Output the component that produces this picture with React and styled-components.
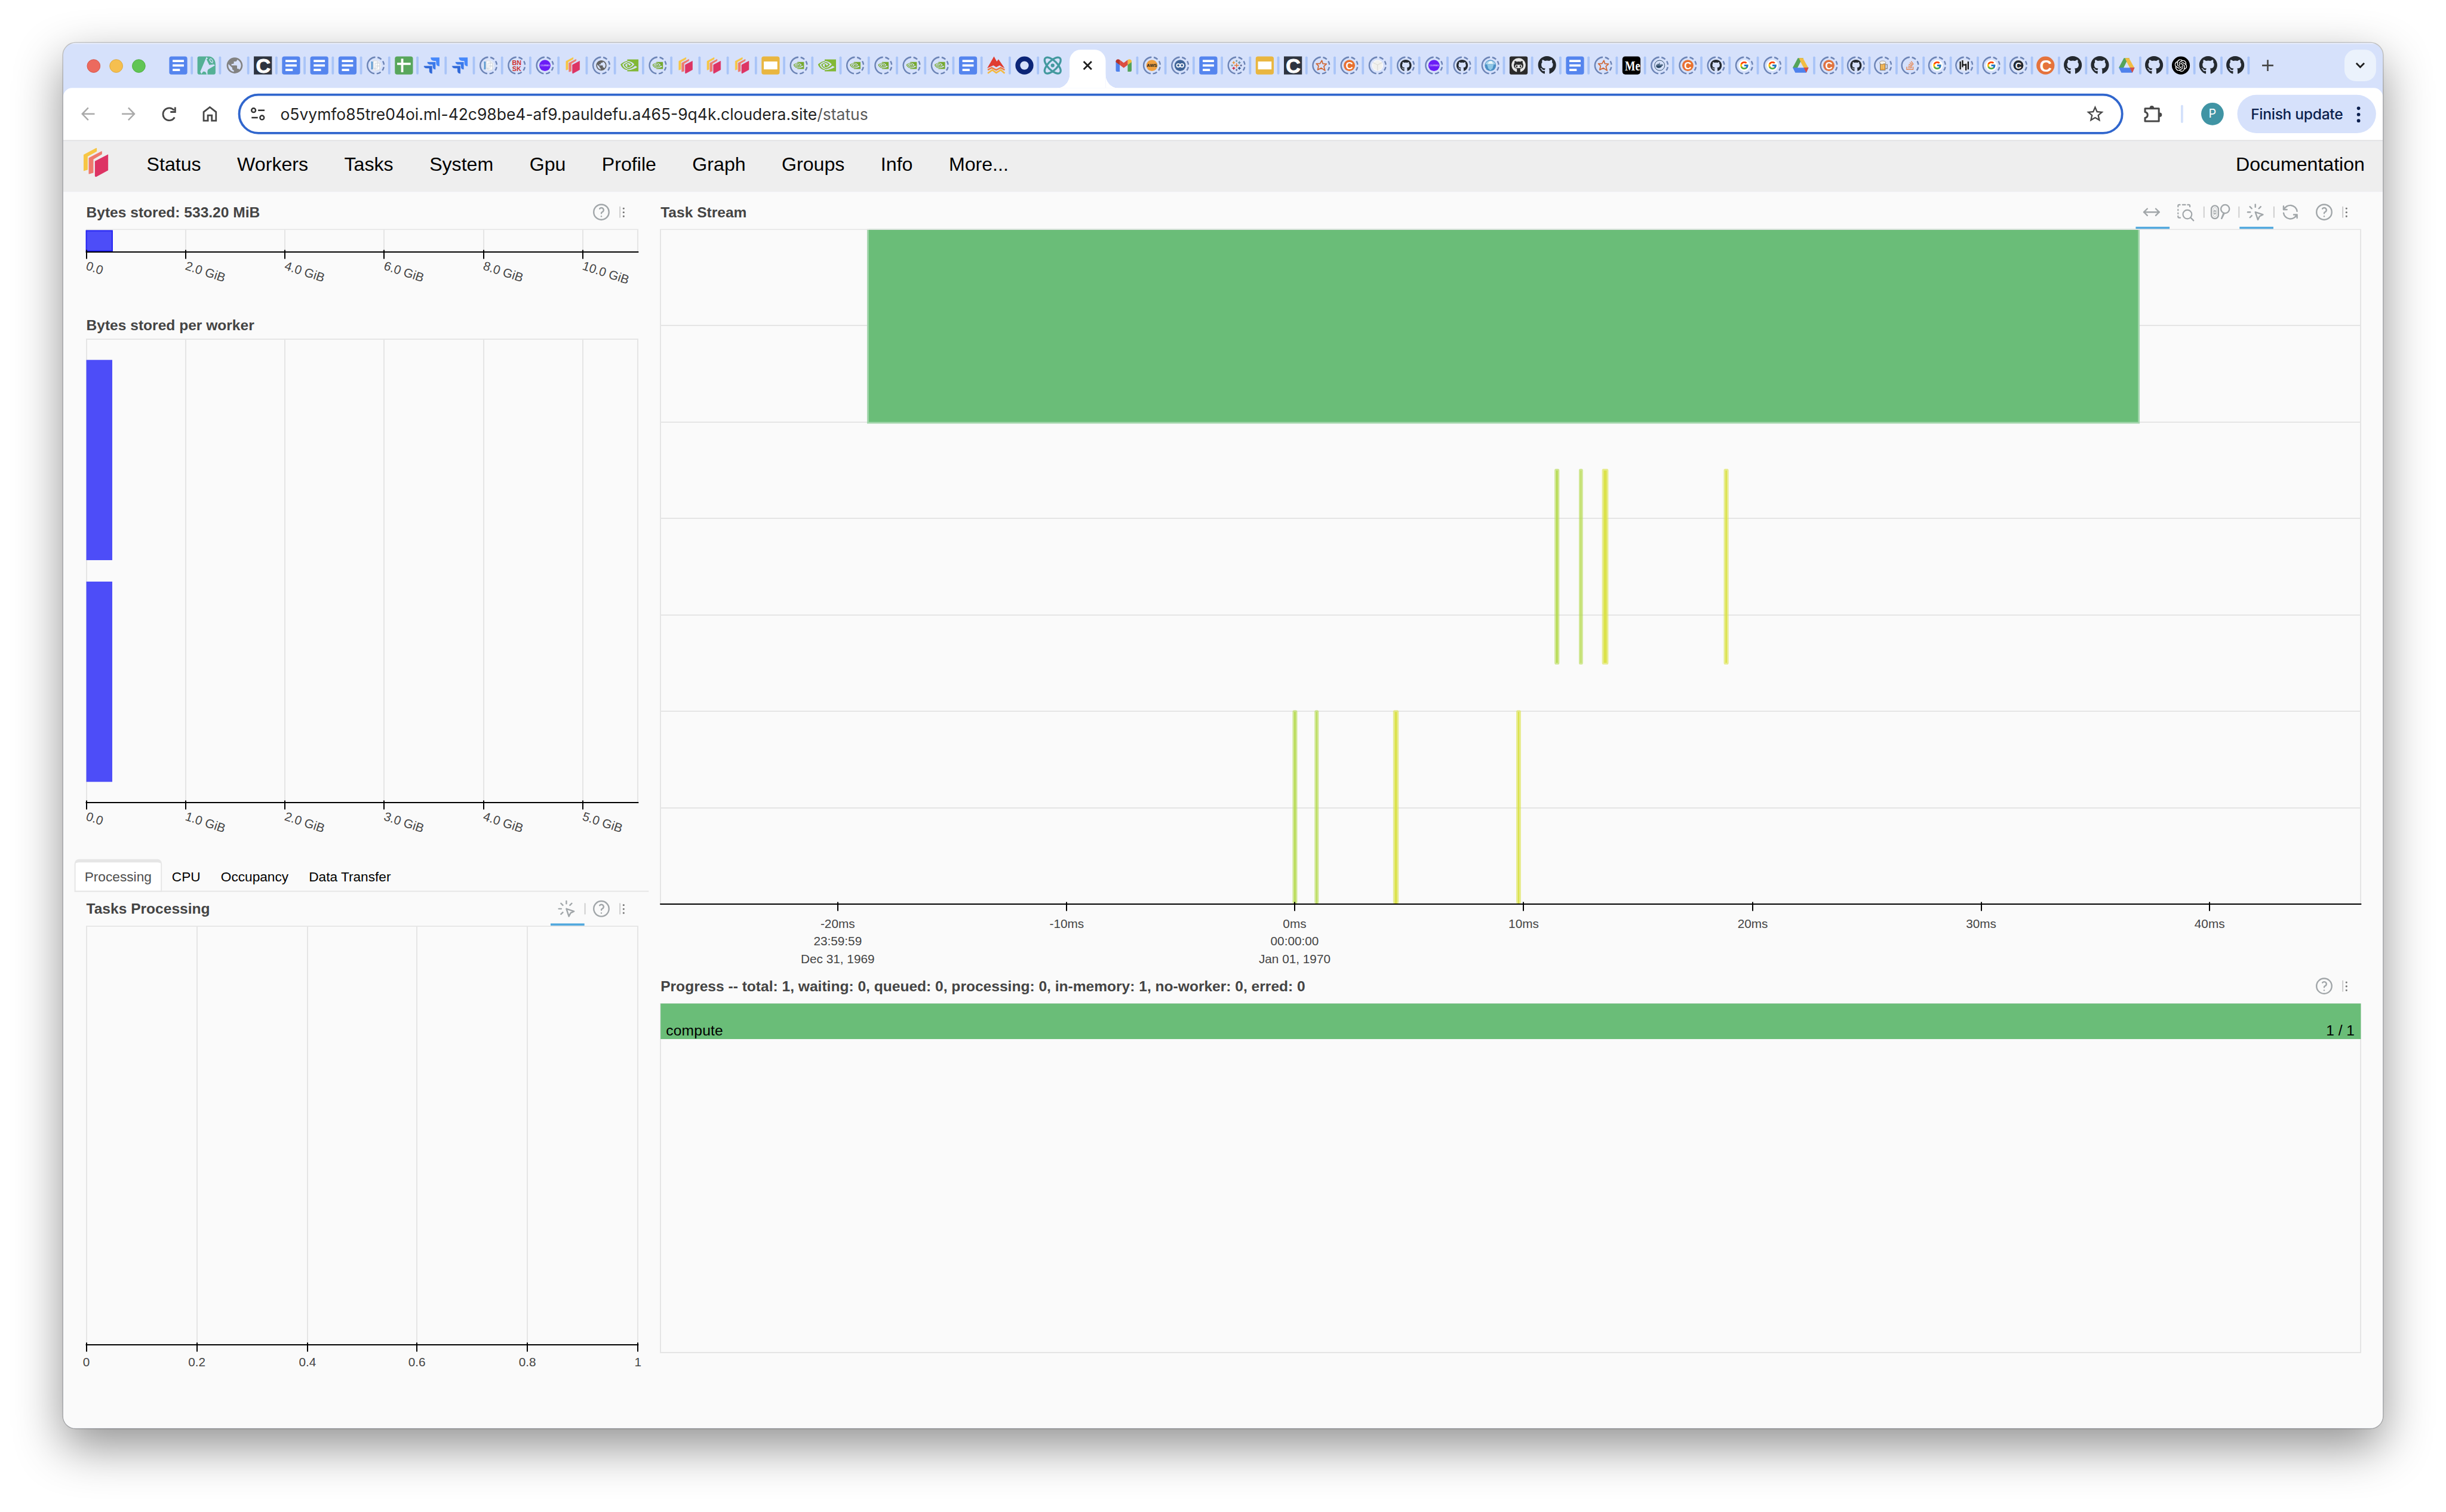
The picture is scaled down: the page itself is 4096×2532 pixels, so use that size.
import React from "react";
import styled, { createGlobalStyle, css } from "styled-components";
import { MdPublic, MdStarBorder } from "react-icons/md";
import { FaGithub, FaGithubAlt, FaStackOverflow, FaDocker } from "react-icons/fa";
import { FcGoogle } from "react-icons/fc";
import { SiNvidia, SiOpenai } from "react-icons/si";
import { TbArrowsHorizontal, TbClick, TbHelp, TbRefresh } from "react-icons/tb";
import { Atom } from "lucide-react";

const sans = `"Liberation Sans", Arial, sans-serif`;
const ui = `Inter, Roboto, sans-serif`;
const scale = 4096 / 4336;

const GlobalStyle = createGlobalStyle`
  html, body { margin: 0; background: #fff; overflow: hidden; }
  *, *::before, *::after { box-sizing: border-box; }
  svg { display: block; flex: none; }
`;

/* ---------- window ---------- */

const Viewport = styled.div`
  width: 4096px;
  height: 2532px;
  overflow: hidden;
`;

const Desktop = styled.div`
  width: 4336px;
  height: 2680px;
  padding: 76px 112px 148px;
  transform: scale(${scale});
  transform-origin: 0 0;
  background: #fff;
  font-family: ${sans};
`;

const Window = styled.div`
  height: 2456px;
  display: flex;
  flex-direction: column;
  border-radius: 22px;
  overflow: hidden;
  background: #d6e1fb;
  box-shadow: 0 0 0 1.5px rgba(0, 0, 0, 0.2), 0 32px 84px rgba(0, 0, 0, 0.43);
`;

/* ---------- tab strip ---------- */

const TabStrip = styled.div`
  height: 80px;
  flex: none;
  display: flex;
  align-items: center;
  padding: 0 12px 0 42px;
  box-shadow: inset 0 2px 0 rgba(255, 255, 255, 0.45);
`;

const Lights = styled.div`
  display: flex;
  gap: 16px;
  padding-top: 2px;
  margin-right: 42px;
`;

const Light = styled.span`
  width: 24px;
  height: 24px;
  border-radius: 50%;
  background: ${(p) => p.$color};
  border: 1px solid ${(p) => p.$edge};
`;

const TabSlot = styled.div`
  width: ${(p) => (p.$narrow ? 48 : 50)}px;
  height: 32px;
  display: flex;
  gap: 6px;

  &::after {
    content: "";
    display: ${(p) => (p.$last ? "none" : "block")};
    width: 4px;
    height: 32px;
    border-radius: 2px;
    background: #a9c4f7;
  }
`;

const ActiveTab = styled.div`
  position: relative;
  align-self: flex-end;
  width: 64px;
  height: 68px;
  margin: 0 16px 0 -4px;
  padding-bottom: 12px;
  display: flex;
  align-items: center;
  justify-content: center;
  background: #fff;
  border-radius: 20px 20px 0 0;

  &::before,
  &::after {
    content: "";
    position: absolute;
    bottom: 0;
    width: 22px;
    height: 24px;
  }
  &::before {
    right: 100%;
    background: radial-gradient(ellipse at 0 0, transparent 70%, #fff 71.5%);
  }
  &::after {
    left: 100%;
    background: radial-gradient(ellipse at 100% 0, transparent 70%, #fff 71.5%);
  }
`;

const NewTab = styled.div`
  width: 48px;
  display: flex;
  justify-content: center;
  margin-left: 2px;
`;

const TabSearch = styled.div`
  width: 56px;
  height: 56px;
  margin-left: auto;
  display: flex;
  align-items: center;
  justify-content: center;
  border-radius: 20px;
  background: #ebf2fc;
`;

/* ---------- address toolbar ---------- */

const Toolbar = styled.div`
  height: 94px;
  flex: none;
  display: flex;
  align-items: center;
  padding: 0 12px 0 8px;
  background: #fff;
  border-bottom: 2px solid #e0e0e0;
  border-radius: 16px 16px 0 0;
`;

const ToolbarButton = styled.div`
  width: 72px;
  display: flex;
  justify-content: center;
  color: ${(p) => (p.$dim ? "#a9a9a9" : "#474747")};
`;

const Omnibox = styled.div`
  flex: 1;
  height: 72px;
  margin: 0 16px 0 14px;
  padding: 0 28px 0 18px;
  display: flex;
  align-items: center;
  border: 4px solid #3066cd;
  border-radius: 36px;
  background: #fff;
`;

const Url = styled.div`
  flex: 1;
  margin-left: 27px;
  padding-top: 1px;
  font: 400 28px/36px ${ui};
  color: #1f1f1f;
  white-space: nowrap;

  span { color: #5a5a5a; }
`;

const ToolbarRule = styled.span`
  width: 4px;
  height: 32px;
  margin: 0 32px 0 14px;
  border-radius: 2px;
  background: #d3e1fb;
`;

const Avatar = styled.div`
  width: 40px;
  height: 40px;
  border-radius: 50%;
  display: flex;
  align-items: center;
  justify-content: center;
  background: #4094a4;
  color: #fff;
  font: 400 21px/40px ${ui};
`;

const UpdatePill = styled.div`
  width: 246px;
  height: 68px;
  margin-left: 24px;
  padding: 1px 27px 0 24px;
  display: flex;
  align-items: center;
  justify-content: space-between;
  border-radius: 34px;
  background: #d6e1fb;
  color: #0b1f4d;
  font: 500 26px/34px ${ui};
  letter-spacing: -0.3px;
  white-space: nowrap;
`;

/* ---------- dashboard ---------- */

const Nav = styled.nav`
  height: 90px;
  flex: none;
  display: flex;
  align-items: flex-start;
  gap: 64px;
  padding: 12px 32px 0 36px;
  background: #eee;
  color: #000;
`;

const NavLink = styled.a`
  margin-top: 12px;
  font: 400 34px/34px ${sans};
  white-space: nowrap;
  margin-left: ${(p) => (p.$right ? "auto" : p.$first ? "4px" : "0")};
`;

const Dashboard = styled.main`
  flex: 1;
  display: grid;
  grid-template-columns: 1018px 1fr;
  padding: 6px 0 0 20px;
  background: #fafafa;
`;

const Column = styled.section`
  display: flex;
  flex-direction: column;
  min-width: 0;
`;

const PlotHeader = styled.header`
  height: ${(p) => (p.$compact ? 48 : 60)}px;
  flex: none;
  display: flex;
  align-items: center;
  justify-content: space-between;
  padding: 0 ${(p) => p.$inset}px 0 21px;
`;

const PlotTitle = styled.h2`
  margin: 0;
  font: 700 26px/30px ${sans};
  color: #444;
  white-space: nowrap;
`;

const Tools = styled.div`
  height: 60px;
  display: flex;
  align-items: center;
  color: #a1a6a9;
`;

const Tool = styled.span`
  width: 60px;
  height: 60px;
  display: flex;
  align-items: center;
  justify-content: center;
  padding-right: 4px;
  border: 0 solid #51a8dd;
  ${(p) => p.$active && css`border-bottom-width: 4px; padding-top: 4px;`}
`;

const ToolRule = styled.span`
  width: 2px;
  height: 20px;
  background: #ccc;
`;

const Grip = styled.span`
  display: flex;
  flex-direction: column;
  gap: 4px;
  margin-left: 4px;

  i {
    width: 3px;
    height: 3px;
    border-radius: 1px;
    background: #777;
  }
`;

const PanelTabs = styled.div`
  height: 58px;
  flex: none;
  display: flex;
  border-bottom: 2px solid #e6e6e6;
`;

const PanelTab = styled.div`
  height: 58px;
  padding: 13px 16px 0;
  border: 2px solid transparent;
  border-top-width: 6px;
  border-radius: 8px 8px 0 0;
  font: 400 24px/24px ${sans};
  color: #000;
  white-space: nowrap;
  ${(p) => p.$active && css`
    color: #4d4d4d;
    background: #fff;
    border-color: #e6e6e6;
  `}
`;

/* ---------- favicons, each on a 32 x 32 grid ---------- */

const FavSvg = styled.svg`
  overflow: visible;
`;

const Fav = ({ children, ...rest }) => (
  <FavSvg width="32" height="32" viewBox="0 0 32 32" {...rest}>{children}</FavSvg>
);

const Doc = () => (
  <Fav>
    <rect width="32" height="32" rx="4" fill="#5585ee" />
    <path d="M6 8h20M6 16h20M6 24h13" stroke="#fff" strokeWidth="4" />
  </Fav>
);
const Sheet = () => (
  <Fav>
    <rect width="32" height="32" rx="4" fill="#58a65c" />
    <path d="M4 13.2h24M13 4v24" stroke="#fff" strokeWidth="4" />
  </Fav>
);
const Slide = () => (
  <Fav>
    <rect width="32" height="32" rx="4" fill="#e9b640" />
    <rect x="4" y="9" width="24" height="14" fill="#fff" />
  </Fav>
);
const Giraffe = () => (
  <Fav>
    <path d="M3 0h17C27 0 32 6 32 14v15a3 3 0 0 1-3 3H3a3 3 0 0 1-3-3V3a3 3 0 0 1 3-3z" fill="#54b095" />
    <path d="M16 1l15 15-12 7c-2 3-1 6-1 9h-2c0-4-3-6-6-5l-3 4-2-4z" fill="#d6e1fb" />
    <path d="M20 3c1 5 5 9 10 11l-9 1-5-10z" fill="#54b095" />
    <ellipse cx="24.500" cy="7.500" rx="2" ry="3.600" transform="rotate(-35 24.500 7.500)" fill="none" stroke="#d6e1fb" strokeWidth="1.200" />
  </Fav>
);
const Globe = () => <MdPublic size={34} color="#828282" style={{ margin: "-1px -1px" }} />;
const Letter = ({ bg, round, size = 36, y = 29 }) => (
  <Fav>
    {round ? <circle cx="16" cy="16" r="16" fill={bg} /> : <rect width="32" height="32" fill={bg} />}
    <text x="16.500" y={y} textAnchor="middle" fontFamily={sans} fontWeight="700" fontSize={size} fill="#fff"
      stroke={round ? "none" : "#fff"} strokeWidth="1">C</text>
  </Fav>
);
const Jira = () => (
  <Fav>
    <path d="M13.500 2H29v15.500c-4 0-6-2.500-6-6V8h-3.500c-3.500 0-6-2-6-6z" fill="#4688fb" />
    <path d="M7 9.500h15.500v14c-4 0-6-2-6-5.500v-3.200H13c-3.600 0-6-2-6-5.300z" fill="#3a79ea" stroke="#d6e1fb" strokeWidth=".8" />
    <path d="M1 16.500h15.500v14.500c-4 0-6-2-6-6v-3.500H7c-3.600 0-6-1.500-6-5z" fill="#2f68d8" stroke="#d6e1fb" strokeWidth=".8" />
  </Fav>
);
const DaskMark = () => (
  <g strokeLinejoin="round" strokeWidth="1.200">
    <path d="M.6 12.600L23 .8v5.400L6.800 15V38.500L.6 40.500z" fill="#f7c644" stroke="#f7c644" />
    <path d="M9.800 18.300L32.200 6.600v4.600L17 20.200V44L9.800 46z" fill="#ef7a6d" stroke="#ef7a6d" />
    <path d="M20.800 24.200L43.400 12.400V39.500L22 51.200l-1.200-1z" fill="#dd3464" stroke="#dd3464" />
  </g>
);
const Dask = () => <Fav viewBox="-5 -2.5 56 57"><DaskMark /></Fav>;
const Nvidia = () => <SiNvidia size={32} color="#82b836" />;
const Mountain = () => (
  <Fav>
    <path d="M0 21L12 0l5 9 3-4 11 16-4-2-5-3-6 3-5-3z" fill="#e03c31" />
    <path d="M1 24l7-4 8 4 8-4 7 4" fill="none" stroke="#ee7a3c" strokeWidth="2.500" />
    <path d="M1 30l8-6 7 5 8-5 7 6" fill="none" stroke="#f4b942" strokeWidth="2.800" />
  </Fav>
);
const NavyRing = () => <Fav><circle cx="16" cy="16" r="11.800" fill="none" stroke="#0c2577" strokeWidth="8.400" /></Fav>;
const ReactAtom = () => <Atom size={38} strokeWidth={2.200} color="#43999f" style={{ margin: "-3px -3px" }} />;
const Gmail = () => (
  <Fav>
    <path d="M2 8v17a2 2 0 0 0 2 2h5V14z" fill="#4f82ec" />
    <path d="M30 8v17a2 2 0 0 1-2 2h-5V14z" fill="#53a35a" />
    <path d="M2 9c0-4 4-5 7-3v9l-7-5z" fill="#b73229" />
    <path d="M30 9c0-4-4-5-7-3v9l7-5z" fill="#f2bd42" />
    <path d="M9 6l7 5.500L23 6v9l-7 5.500L9 15z" fill="#dc4d41" />
  </Fav>
);
const Drive = () => (
  <Fav>
    <path d="M11 3h5l5 0-6 8L7.500 27 2 20z" fill="#54a45a" />
    <path d="M13 3h7l10 18H21z" fill="#f2bd42" />
    <path d="M2 20h28l-4 9H6.500z" fill="#4f82ec" />
    <path d="M21.500 20H30l-4 9z" fill="#dc4d41" />
    <path d="M16 11l5.500 9h-11z" fill="#d6e1fb" />
  </Fav>
);
const Octocat = () => <FaGithub size={33} color="#24292f" style={{ margin: "-1px -1px 0 0" }} />;
const OctocatTile = () => (
  <Fav>
    <rect width="32" height="32" rx="3" fill="#2b2b2b" />
    <circle cx="16" cy="15.500" r="12.500" fill="#e6e6e6" />
    <FaGithubAlt x="7" y="6" size={18} color="#2b2b2b" />
    <path d="M13 21h6v8h-6z" fill="#2b2b2b" />
  </Fav>
);
const Medium = () => (
  <Fav>
    <rect width="32" height="32" rx="5" fill="#000" />
    <text x="4.500" y="24.500" fontFamily={`"Liberation Serif", serif`} fontWeight="700" fontSize="25" fill="#fff"
      textLength="27" lengthAdjust="spacingAndGlyphs">Me</text>
  </Fav>
);
const OpenAi = () => (
  <Fav>
    <circle cx="16" cy="16" r="16" fill="#000" />
    <SiOpenai x="5" y="5" size={22} color="#fff" />
  </Fav>
);

/* a sleeping tab: the favicon shrinks inside a broken ring */
const Asleep = ({ children }) => (
  <Fav>
    <circle cx="16" cy="16" r="14.700" fill="none" stroke="#6c84b6" strokeWidth="2.600" pathLength="360"
      strokeDasharray="168 16 30 16 26 16 26 16 30 16" transform="rotate(99 16 16)" />
    {children}
  </Fav>
);
const Disc = ({ fill, children }) => (
  <Asleep><circle cx="16" cy="16" r="10" fill={fill} />{children}</Asleep>
);
const tiny = (text, size, fill, y, family = sans) => (
  <text x="16" y={y} textAnchor="middle" fontFamily={family} fontWeight="700" fontSize={size} fill={fill}>{text}</text>
);
const SleepDocs = () => (
  <Disc fill="#e9edf4">
    <path d="M8 9h3v14H8z" fill="#5d9ad0" />
    <path d="M12 8h7v13h-7zM15 12h8v12h-8z" fill="#fbfbfb" stroke="#c6ccd6" strokeWidth=".8" />
    <path d="M17 17h6" stroke="#c6ccd6" />
  </Disc>
);
const SleepBnsk = () => <Asleep>{tiny("BN", 11.500, "#d0312d", 15.500)}{tiny("SK", 11.500, "#d0312d", 25.500)}</Asleep>;
const SleepPurple = () => <Disc fill="#6b1cf6">{tiny("COURSES", 3.300, "#d9c6ff", 17)}</Disc>;
const SleepGlobe = () => <Asleep><MdPublic x="5" y="5" size={22} color="#636363" /></Asleep>;
const SleepNvidia = () => <Asleep><SiNvidia x="6.500" y="6.500" size={19} color="#76a92f" /></Asleep>;
const SleepAws = () => <Disc fill="#f0a040">{tiny("AWS", 8, "#222", 19)}</Disc>;
const SleepInfinity = () => (
  <Disc fill="#3f6497">
    <circle cx="12.800" cy="16" r="3" fill="none" stroke="#fff" strokeWidth="1.800" />
    <circle cx="19.200" cy="16" r="3" fill="none" stroke="#fff" strokeWidth="1.800" />
  </Disc>
);
const plus = (x, y, r, c) => <path key={x + "-" + y} d={`M${x - r} ${y}h${2 * r}M${x} ${y - r}v${2 * r}`} stroke={c} strokeWidth="1.500" />;
const SleepTableau = () => (
  <Asleep>
    {[[16, 16, 4, "#e8762d"], [11, 11, 2.500, "#eb9129"], [21, 11, 2.500, "#5b879b"], [11, 21, 2.500, "#c72035"], [21, 21, 2.500, "#1f447e"],
      [16, 8, 1.700, "#7199a6"], [16, 24, 1.700, "#5c6692"], [8, 16, 1.700, "#7199a6"], [24, 16, 1.700, "#5c6692"]].map((a) => plus(...a))}
  </Asleep>
);
const SleepStar = () => (
  <Asleep>
    <path d="M16 7l2.500 5.500 6.500-.5-4 5 3 7-7-3.500-6 4 .5-7L7 14l6.500-.8z" fill="none" stroke="#cf6a3a" strokeWidth="1.900" strokeLinejoin="round" transform="rotate(8 16 16)" />
  </Asleep>
);
const SleepC = ({ fill = "#e8702f" }) => <Disc fill={fill}>{tiny("C", 18, "#fff", 22.300)}</Disc>;
const SleepCDark = () => (
  <Disc fill="#fff">
    <circle cx="16" cy="16" r="9" fill="#262b33" />
    {tiny("C", 15, "#fff", 21.300)}
  </Disc>
);
const SleepCube = () => (
  <Disc fill="#fafafa">
    <path d="M16 7l8 4v10l-8 4.500L8 21V11z" fill="#f1f1ee" />
    <path d="M8 11l8 4 8-4M16 15v10" fill="none" stroke="#d4d4cf" />
  </Disc>
);
const SleepOctocat = () => <Asleep><FaGithub x="5.500" y="5.500" size={21} color="#24292f" /></Asleep>;
const SleepIceberg = () => (
  <Disc fill="#4a8fc4">
    <path d="M7 14a9.500 9.500 0 0 1 18 0z" fill="#a9d3ea" />
    <path d="M11 13l3-4 4-1 3 5z" fill="#eef8fc" />
    <path d="M10 14h12l-2 7-4 4-4-4z" fill="#8fc7e6" />
  </Disc>
);
const SleepDocker = () => (
  <Asleep>
    <circle cx="16" cy="16" r="9" fill="none" stroke="#2d4a66" strokeWidth="1" />
    <FaDocker x="9.500" y="9.500" size={13} color="#2d4a66" />
  </Asleep>
);
const SleepGoogle = () => <Disc fill="#fff"><FcGoogle x="7.500" y="7.500" size={17} /></Disc>;
const SleepBeer = () => (
  <Asleep>
    <path d="M11 12h9v12.500h-9z" fill="#e9a23b" stroke="#666" strokeWidth=".8" />
    <path d="M20.500 14.500h3v7h-3" fill="none" stroke="#8a8a8a" strokeWidth="1.400" />
    <path d="M10 12c0-3 2-4 5.500-4S21 9 21 12c-2 2-3 0-5 1.500-2 1.500-4 0-6-1.500z" fill="#f6f2ea" stroke="#777" strokeWidth=".7" />
    <path d="M14 15v7M17 15v7" stroke="#f6d58c" strokeWidth="1.200" />
  </Asleep>
);
const SleepStack = () => <Asleep><FaStackOverflow x="7" y="7" size={18} color="#e8844a" /></Asleep>;
const SleepHn = () => (
  <Disc fill="#e8ebf2">
    <path d="M9 9v14M13 7v12M19 13v12M23 9v14M13 15h6" stroke="#151515" strokeWidth="2.400" fill="none" />
  </Disc>
);

const leftTabs = [
  Doc, Giraffe, Globe, () => <Letter bg="#2e3440" />, Doc, Doc, Doc, SleepDocs, Sheet, Jira, Jira, SleepDocs,
  SleepBnsk, SleepPurple, Dask, SleepGlobe, Nvidia, SleepNvidia, Dask, Dask, Dask, Slide, SleepNvidia, Nvidia,
  SleepNvidia, SleepNvidia, SleepNvidia, SleepNvidia, Doc, Mountain, NavyRing, ReactAtom,
];
const rightTabs = [
  Gmail, SleepAws, SleepInfinity, Doc, SleepTableau, Slide, () => <Letter bg="#2e3440" />, SleepStar, SleepC,
  SleepCube, SleepOctocat, SleepPurple, SleepOctocat, SleepIceberg, OctocatTile, Octocat, Doc, SleepStar, Medium,
  SleepDocker, SleepC, SleepOctocat, SleepGoogle, SleepGoogle, Drive, () => <SleepC fill="#e0733f" />, SleepOctocat,
  SleepBeer, SleepStack, SleepGoogle, SleepHn, SleepGoogle, SleepCDark,
  () => <Letter bg="#e5733c" round size={30} y={26.500} />, Octocat, Octocat, Drive, Octocat, OpenAi, Octocat, Octocat,
];

/* ---------- toolbar icons ---------- */

const Line = ({ w, h, d, sw = 3.400 }) => (
  <svg width={w} height={h} viewBox={`0 0 ${w} ${h}`} fill="none" stroke="currentColor" strokeWidth={sw}>
    <path d={d} />
  </svg>
);
const Arrow = ({ flip }) => (
  <svg width="24" height="24" viewBox="0 0 24 24" fill="none" stroke="currentColor" strokeWidth="2.600" transform={flip ? "scale(-1 1)" : undefined}>
    <path d="M12.500 1L1.800 12l10.700 11M2 12h22" />
  </svg>
);
const Reload = () => <Line w={26} h={26} sw={3} d="M22.500 19A11 11 0 1 1 21.500 6.500M23.500 1v8.500H15" />;
const Home = () => <Line w={26} h={28} sw={3} d="M2 26V10.500L13 2l11 8.500V26h-7.500v-9.500h-7V26z" />;
const SiteInfo = () => (
  <svg width="26" height="24" viewBox="0 0 26 24" fill="none" stroke="#303030" strokeWidth="2.600">
    <circle cx="5.500" cy="5.500" r="3.600" /><path d="M13.500 5.500H25M2 18.500h11" /><circle cx="20.500" cy="18.500" r="3.600" />
  </svg>
);
const Extension = () => (
  <svg width="34" height="34" viewBox="0 0 34 34">
    <path d="M3.500 7.500h24.500v22.500H3.500V24c6-1.500 6-9 0-10.500z" fill="none" stroke="#474747" strokeWidth="3.200" strokeLinejoin="round" />
    <path d="M11.500 7a4 4.500 0 0 1 8 0zM29 14.500a4.500 4 0 0 1 0 8z" fill="#474747" />
  </svg>
);
const Dots = () => (
  <svg width="8" height="30" viewBox="0 0 8 30" fill="#0b1f4d">
    <circle cx="4" cy="4" r="3" /><circle cx="4" cy="15" r="3" /><circle cx="4" cy="26" r="3" />
  </svg>
);
const BoxZoom = () => (
  <svg width="36" height="36" viewBox="0 0 36 36" fill="none" stroke="currentColor" strokeWidth="2.300" strokeLinecap="round">
    <path d="M5 8.500V7a2 2 0 0 1 2-2h1.500M13 5h5M22 5h2a2 2 0 0 1 2 2v1.500M5 13.500v1.500M5 19.500v1.500M5 25v1a2 2 0 0 0 2 2h2" />
    <circle cx="21.500" cy="22" r="7.800" /><path d="M27.500 28l5 5" />
  </svg>
);
const WheelZoom = () => (
  <svg width="36" height="36" viewBox="0 0 36 36" fill="none" stroke="currentColor" strokeWidth="2.500" strokeLinecap="round">
    <rect x="2" y="6.500" width="12.500" height="23" rx="6.200" />
    <rect x="5.300" y="10" width="6" height="16" rx="3" strokeWidth="1" opacity=".6" />
    <path d="M6.200 17h4.200l-2.100-3zM6.200 19.500h4.200l-2.100 3z" fill="currentColor" strokeWidth=".6" />
    <circle cx="26.500" cy="12.500" r="7.500" /><path d="M23.500 20l-3.700 9.500M25 20.500l-4.500 9" strokeWidth="2" />
  </svg>
);

const PlotTools = ({ inset, full, tap, compact, title, bare }) => (
  <PlotHeader $compact={compact} $inset={inset}>
    <PlotTitle>{title}</PlotTitle>
    {!bare && (
      <Tools>
        {full && (
          <>
            <Tool $active><TbArrowsHorizontal size={36} strokeWidth={1.700} /></Tool>
            <Tool><BoxZoom /></Tool>
            <ToolRule />
            <Tool><WheelZoom /></Tool>
            <ToolRule />
          </>
        )}
        {(full || tap) && (
          <>
            <Tool $active><TbClick size={36} strokeWidth={1.700} /></Tool>
            <ToolRule />
          </>
        )}
        {full && <Tool><TbRefresh size={36} strokeWidth={1.700} /></Tool>}
        <Tool><TbHelp size={36} strokeWidth={1.700} /></Tool>
        <ToolRule />
        <Grip><i /><i /><i /></Grip>
      </Tools>
    )}
  </PlotHeader>
);

/* ---------- charts (user units are window pixels) ---------- */

const Chart = styled.svg`
  font-family: ${sans};
  font-size: 22px;
  fill: #444;
`;

/* puts the middle of a two pixel line on a device pixel edge */
const snap = (v) => Math.round(v * scale) / scale;
const hair = 2 / scale;

const Rule = ({ d, color = "#e5e5e5" }) => <path d={d} fill="none" stroke={color} strokeWidth={hair} />;

const Frame = ({ x1, x2, y1, y2 }) => (
  <Rule d={`M${snap(x1)} ${y2}V${snap(y1)}H${snap(x2)}V${y2}`} />
);
const Axis = ({ x1, x2, y, ticks }) => (
  <>
    <Rule color="#000" d={`M${x1 - 1} ${snap(y)}H${x2 + 1}`} />
    {ticks.map((x) => <Rule key={x} color="#000" d={`M${snap(x)} ${y - 4}v16`} />)}
  </>
);

const byteTicks = [153, 329, 505, 681, 857, 1033];

const BytesChart = ({ top, height, axis, labels, bars }) => (
  <Chart width="1018" height={height} viewBox={`132 ${top} 1018 ${height}`}>
    {byteTicks.slice(1).map((x) => <Rule key={x} d={`M${snap(x)} ${top}V${axis}`} />)}
    <Frame x1={153} x2={1131} y1={top + 1} y2={axis} />
    {bars.map(([y, h, edge]) => (
      <rect key={y} x="153" y={y} width="46" height={h} fill="#4d4df8" stroke={edge} strokeWidth={edge === "none" ? 0 : 2} />
    ))}
    <Axis x1={153} x2={1131} y={axis} ticks={byteTicks} />
    {labels.map((t, i) => (
      <text key={t} transform={`translate(${byteTicks[i] - 2} ${axis + 30.500}) rotate(18)`}>{t}</text>
    ))}
  </Chart>
);

const unitTicks = [153, 349, 545, 739, 935, 1131];

const ProcessingChart = () => (
  <Chart width="1018" height="800" viewBox="132 1641 1018 800">
    {unitTicks.slice(1, 5).map((x) => <Rule key={x} d={`M${snap(x)} 1642V2384`} />)}
    <Frame x1={153} x2={1131} y1={1642} y2={2384} />
    <Axis x1={153} x2={1131} y={2384} ticks={unitTicks} />
    {["0", "0.2", "0.4", "0.6", "0.8", "1"].map((t, i) => (
      <text key={t} x={unitTicks[i]} y="2422" textAnchor="middle">{t}</text>
    ))}
  </Chart>
);

const streamTicks = [
  [1485, ["-20ms", "23:59:59", "Dec 31, 1969"]],
  [1891, ["-10ms"]],
  [2295, ["0ms", "00:00:00", "Jan 01, 1970"]],
  [2701, ["10ms"]],
  [3107, ["20ms"]],
  [3512, ["30ms"]],
  [3917, ["40ms"]],
];
const lime = "#b4da4c";
const yellow = "#dbe24a";
/* centre, core width, row, colour */
const streamTasks = [
  [2760, 2.600, 0, lime], [2802.500, 1.200, 0, lime], [2845.500, 5.400, 0, yellow], [3060, 2.600, 0, yellow],
  [2295.500, 2.400, 1, lime], [2334, 1.400, 1, lime], [2474.500, 4, 1, yellow], [2692, 2.400, 1, yellow],
];
const rowTop = [834, 1262];

const StreamChart = () => (
  <Chart width="3054" height="1312" viewBox="1150 406 3054 1312">
    {[577, 748, 919, 1090, 1261, 1432].map((y) => <Rule key={y} d={`M1171 ${snap(y)}H4185`} />)}
    <Frame x1={1171} x2={4185} y1={407} y2={1603} />
    <rect x="1537" y="406" width="2256" height="345" fill="#a4d6ad" />
    <rect x="1540" y="406" width="2250" height="342" fill="#6abd78" />
    <Rule d={`M1537 ${snap(407)}H3793`} />
    {streamTasks.map(([x, w, row, color]) => (
      <g key={x} fill={color}>
        <rect x={x - w / 2 - 3} y={rowTop[row] - 3} width={w + 6} height={row ? 343 : 347} rx="3" opacity=".6" />
        <rect x={x - w / 2} y={rowTop[row]} width={w} height="341" />
      </g>
    ))}
    <Axis x1={1171} x2={4185} y={1603} ticks={streamTicks.map((t) => t[0])} />
    {streamTicks.map(([x, lines]) => lines.map((t, i) => (
      <text key={t} x={x} y={1645 + i * 31} textAnchor="middle">{t}</text>
    )))}
  </Chart>
);

const ProgressChart = () => (
  <Chart width="3054" height="640" viewBox="1150 1778 3054 640">
    <Rule d={`M${snap(1171)} ${snap(1779)}H${snap(4185)}V${snap(2398)}H${snap(1171)}z`} />
    <rect x="1171" y="1779" width="3014" height="63" fill="#6abd78" />
    <text x="1180.500" y="1835.500" fontSize="26" fill="#000" letterSpacing=".25">compute</text>
    <text x="4174" y="1835.500" fontSize="26" fill="#000" textAnchor="end">1 / 1</text>
  </Chart>
);

export default function App() {
  return (
    <Viewport>
      <GlobalStyle />
      <Desktop>
        <Window>
          <TabStrip>
            <Lights>
              <Light $color="#ec6a5e" $edge="#d55448" />
              <Light $color="#f5bf4f" $edge="#dba63a" />
              <Light $color="#61c554" $edge="#4cac40" />
            </Lights>
            {leftTabs.map((Icon, i) => <TabSlot key={i} $last={i === 31}><Icon /></TabSlot>)}
            <ActiveTab>
              <svg width="18" height="18" viewBox="0 0 18 18"><path d="M2 2l14 14M16 2L2 16" stroke="#1f1f1f" strokeWidth="3" /></svg>
            </ActiveTab>
            {rightTabs.map((Icon, i) => <TabSlot key={i} $narrow={i >= 25}><Icon /></TabSlot>)}
            <NewTab>
              <svg width="22" height="22" viewBox="0 0 22 22"><path d="M11 1v20M1 11h20" stroke="#474747" strokeWidth="2.800" /></svg>
            </NewTab>
            <TabSearch>
              <svg width="18" height="12" viewBox="0 0 18 12"><path d="M2 2l7 7 7-7" fill="none" stroke="#1f1f1f" strokeWidth="3" /></svg>
            </TabSearch>
          </TabStrip>
          <Toolbar>
            <ToolbarButton $dim><Arrow /></ToolbarButton>
            <ToolbarButton $dim><Arrow flip /></ToolbarButton>
            <ToolbarButton><Reload /></ToolbarButton>
            <ToolbarButton><Home /></ToolbarButton>
            <Omnibox>
              <SiteInfo />
              <Url>o5vymfo85tre04oi.ml-42c98be4-af9.pauldefu.a465-9q4k.cloudera.site<span>/status</span></Url>
              <MdStarBorder size={36} color="#474747" />
            </Omnibox>
            <ToolbarButton><Extension /></ToolbarButton>
            <ToolbarRule />
            <Avatar>P</Avatar>
            <UpdatePill>Finish update<Dots /></UpdatePill>
          </Toolbar>
          <Nav>
            <svg width="44" height="52" viewBox="0 0 44 52"><DaskMark /></svg>
            {["Status", "Workers", "Tasks", "System", "Gpu", "Profile", "Graph", "Groups", "Info", "More..."].map((t, i) => (
              <NavLink key={t} $first={i === 0}>{t}</NavLink>
            ))}
            <NavLink $right>Documentation</NavLink>
          </Nav>
          <Dashboard>
            <Column>
              <PlotTools title="Bytes stored: 533.20 MiB" inset={43} />
              <BytesChart top={406} height={146} axis={447} bars={[[409, 36, "#1f1ff2"]]}
                labels={["0.0", "2.0 GiB", "4.0 GiB", "6.0 GiB", "8.0 GiB", "10.0 GiB"]} />
              <PlotTools title="Bytes stored per worker" compact bare inset={43} />
              <BytesChart top={600} height={923} axis={1423} bars={[[638, 355, "none"], [1031, 355, "none"]]}
                labels={["0.0", "1.0 GiB", "2.0 GiB", "3.0 GiB", "4.0 GiB", "5.0 GiB"]} />
              <PanelTabs>
                <PanelTab $active>Processing</PanelTab>
                <PanelTab>CPU</PanelTab>
                <PanelTab>Occupancy</PanelTab>
                <PanelTab>Data Transfer</PanelTab>
              </PanelTabs>
              <PlotTools title="Tasks Processing" tap inset={43} />
              <ProcessingChart />
            </Column>
            <Column>
              <PlotTools title="Task Stream" full inset={63} />
              <StreamChart />
              <PlotTools title="Progress -- total: 1, waiting: 0, queued: 0, processing: 0, in-memory: 1, no-worker: 0, erred: 0" inset={63} />
              <ProgressChart />
            </Column>
          </Dashboard>
        </Window>
      </Desktop>
    </Viewport>
  );
}
